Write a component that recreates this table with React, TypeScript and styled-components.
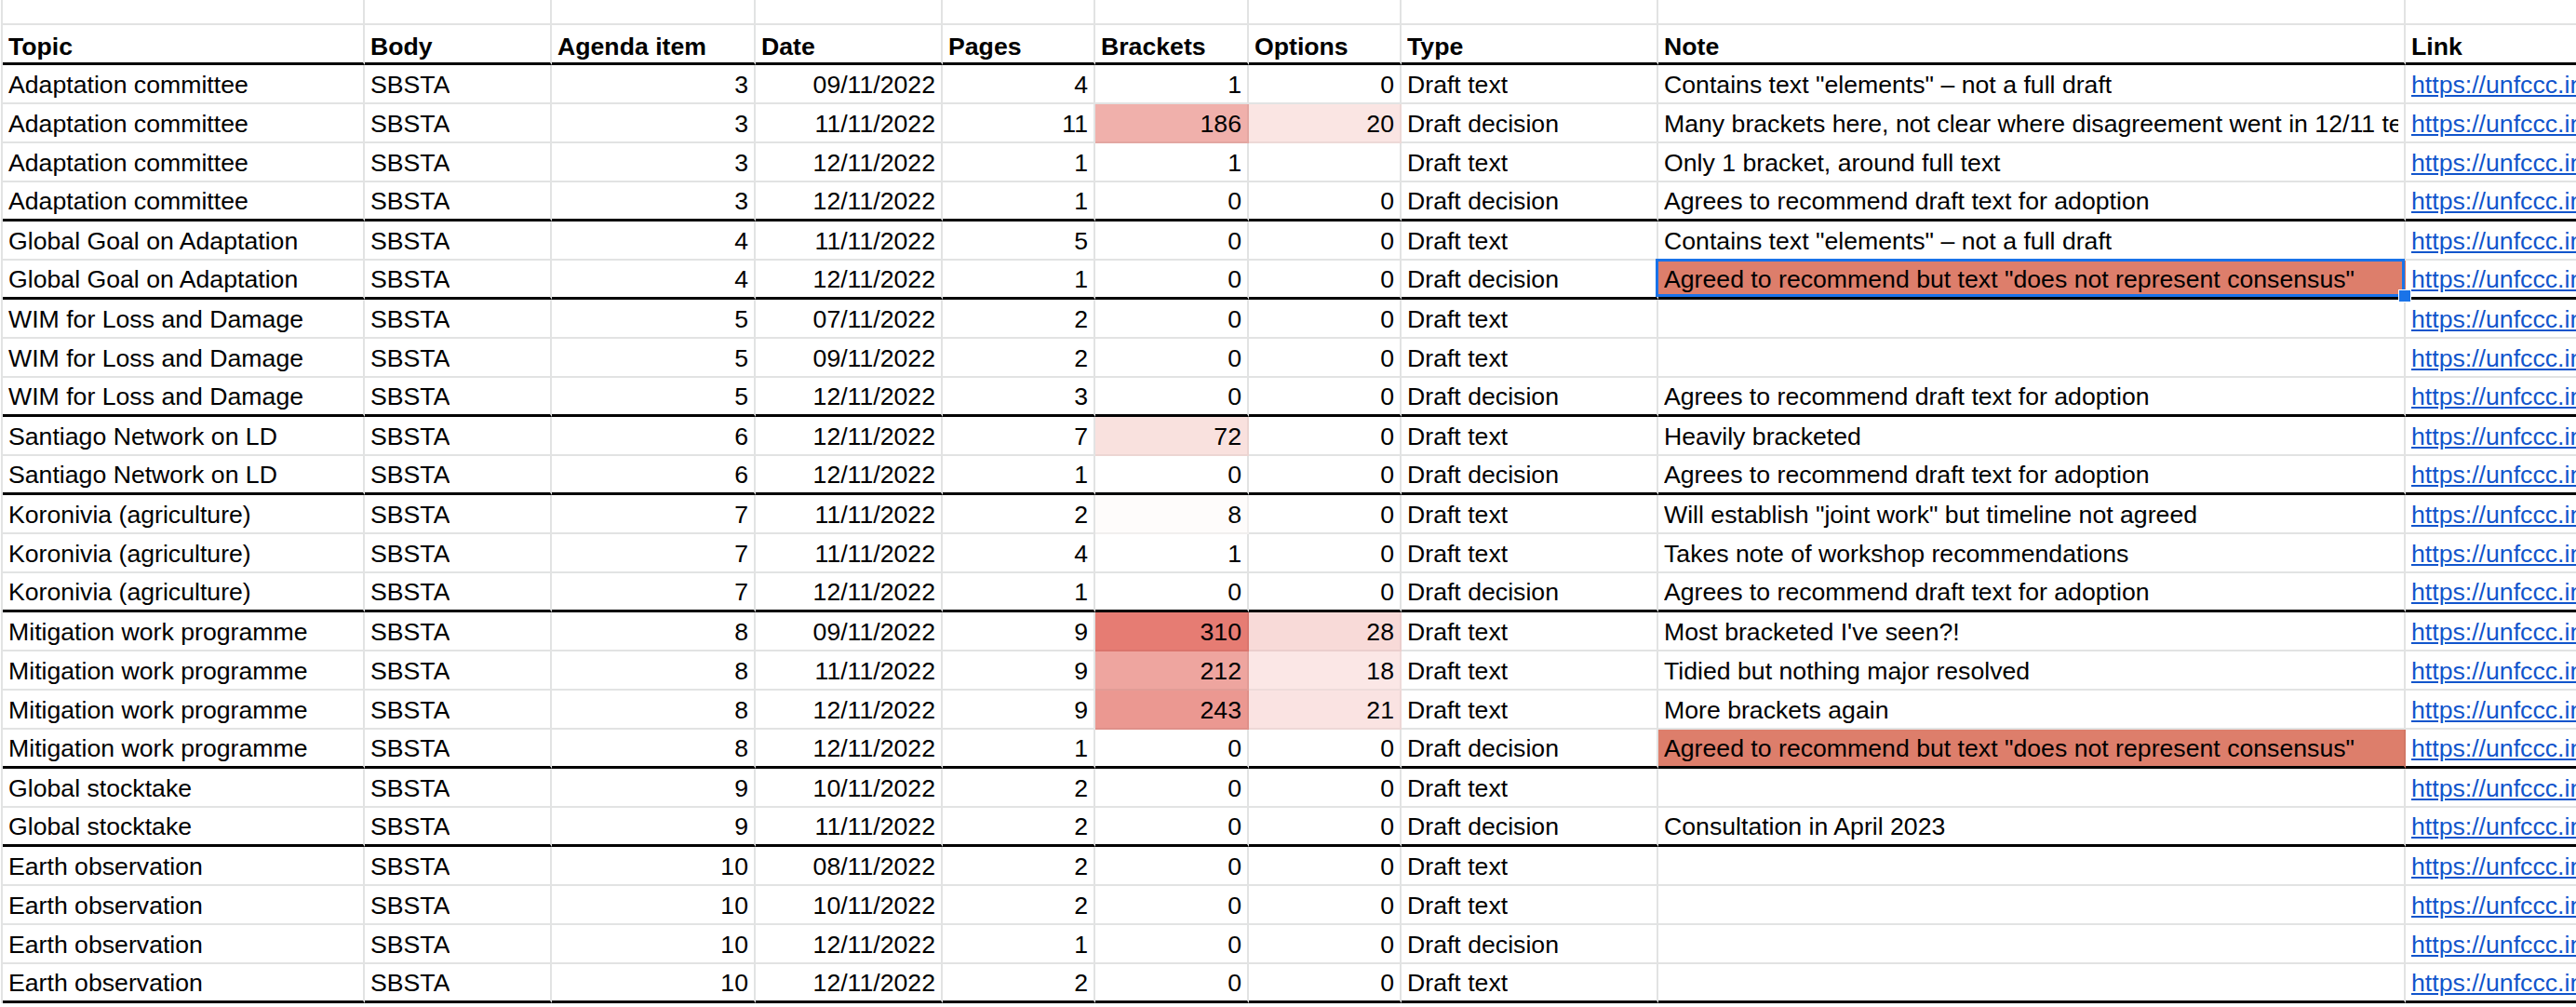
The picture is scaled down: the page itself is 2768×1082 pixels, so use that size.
import React from 'react';
import styled, { createGlobalStyle } from 'styled-components';

const GlobalStyle = createGlobalStyle`
  html, body { margin: 0; padding: 0; background: #fff; overflow: hidden; }
  body { font-family: "Liberation Sans", Arial, sans-serif; }
`;

const GRID = '389px 201px 219px 201px 164px 165px 164px 276px 803px 520px';
const GRIDLINE = '#e2e3e3';

type Kind = 'spacer' | 'header' | 'data';

const Sheet = styled.div`
  display: flex;
  flex-direction: column;
  margin-left: 1px;
  border-left: 2px solid ${GRIDLINE};
  width: max-content;
`;

const Row = styled.div<{ $kind: Kind }>`
  display: grid;
  grid-template-columns: ${GRID};
  height: ${(p) => (p.$kind === 'spacer' ? 27 : p.$kind === 'header' ? 43 : 42)}px;
`;

const Cell = styled.div<{
  $align?: 'left' | 'right';
  $kind: Kind;
  $fill?: string;
  $thick?: boolean;
}>`
  position: relative;
  box-sizing: border-box;
  display: flex;
  align-items: flex-end;
  justify-content: ${(p) => (p.$align === 'right' ? 'flex-end' : 'flex-start')};
  padding: 0 6px ${(p) => (p.$kind === 'header' ? 2 : 4)}px 6px;
  background: ${(p) => p.$fill ?? 'transparent'};
  border-right: 2px solid ${(p) => (p.$fill ? 'rgba(0,0,0,0.05)' : GRIDLINE)};
  border-bottom: ${(p) =>
    p.$thick ? '3px solid #000' : `2px solid ${p.$fill ? 'rgba(0,0,0,0.05)' : GRIDLINE}`};
  font-size: 26.67px;
  line-height: 30px;
  font-weight: ${(p) => (p.$kind === 'header' ? 700 : 400)};
  color: #000;
  min-width: 0;
`;

const Text = styled.span`
  display: block;
  min-width: 0;
  overflow: hidden;
  white-space: nowrap;
`;

const LinkText = styled.span`
  display: block;
  white-space: nowrap;
  overflow: hidden;
  color: #1155cc;
  text-decoration: underline;
  text-decoration-thickness: 2px;
  text-underline-offset: 2px;
`;

const Selection = styled.div`
  position: absolute;
  z-index: 2;
  top: -2px;
  left: -3px;
  right: -1px;
  bottom: 0;
  border: 3px solid #1a73e8;
  pointer-events: none;
`;

const Handle = styled.div`
  position: absolute;
  z-index: 3;
  right: -7px;
  bottom: -5px;
  width: 12px;
  height: 12px;
  background: #1a73e8;
  box-shadow: 0 0 0 1px #fff;
`;

type Entry = {
  topic: string;
  item: number;
  date: string;
  pages: number;
  brackets: number;
  options: number | null;
  type: string;
  note: string;
  end?: boolean;
  flag?: boolean;
  selected?: boolean;
};

const AC = 'Adaptation committee';
const GGA = 'Global Goal on Adaptation';
const WIM = 'WIM for Loss and Damage';
const SN = 'Santiago Network on LD';
const KOR = 'Koronivia (agriculture)';
const MWP = 'Mitigation work programme';
const GST = 'Global stocktake';
const EO = 'Earth observation';
const AGREES = 'Agrees to recommend draft text for adoption';
const CONSENSUS = 'Agreed to recommend but text "does not represent consensus"';
const ELEMENTS = 'Contains text "elements" – not a full draft';

const rows: Entry[] = [
  { topic: AC, item: 3, date: '09/11/2022', pages: 4, brackets: 1, options: 0, type: 'Draft text', note: ELEMENTS },
  { topic: AC, item: 3, date: '11/11/2022', pages: 11, brackets: 186, options: 20, type: 'Draft decision', note: 'Many brackets here, not clear where disagreement went in 12/11 text' },
  { topic: AC, item: 3, date: '12/11/2022', pages: 1, brackets: 1, options: null, type: 'Draft text', note: 'Only 1 bracket, around full text' },
  { topic: AC, item: 3, date: '12/11/2022', pages: 1, brackets: 0, options: 0, type: 'Draft decision', note: AGREES, end: true },
  { topic: GGA, item: 4, date: '11/11/2022', pages: 5, brackets: 0, options: 0, type: 'Draft text', note: ELEMENTS },
  { topic: GGA, item: 4, date: '12/11/2022', pages: 1, brackets: 0, options: 0, type: 'Draft decision', note: CONSENSUS, end: true, flag: true, selected: true },
  { topic: WIM, item: 5, date: '07/11/2022', pages: 2, brackets: 0, options: 0, type: 'Draft text', note: '' },
  { topic: WIM, item: 5, date: '09/11/2022', pages: 2, brackets: 0, options: 0, type: 'Draft text', note: '' },
  { topic: WIM, item: 5, date: '12/11/2022', pages: 3, brackets: 0, options: 0, type: 'Draft decision', note: AGREES, end: true },
  { topic: SN, item: 6, date: '12/11/2022', pages: 7, brackets: 72, options: 0, type: 'Draft text', note: 'Heavily bracketed' },
  { topic: SN, item: 6, date: '12/11/2022', pages: 1, brackets: 0, options: 0, type: 'Draft decision', note: AGREES, end: true },
  { topic: KOR, item: 7, date: '11/11/2022', pages: 2, brackets: 8, options: 0, type: 'Draft text', note: 'Will establish "joint work" but timeline not agreed' },
  { topic: KOR, item: 7, date: '11/11/2022', pages: 4, brackets: 1, options: 0, type: 'Draft text', note: 'Takes note of workshop recommendations' },
  { topic: KOR, item: 7, date: '12/11/2022', pages: 1, brackets: 0, options: 0, type: 'Draft decision', note: AGREES, end: true },
  { topic: MWP, item: 8, date: '09/11/2022', pages: 9, brackets: 310, options: 28, type: 'Draft text', note: "Most bracketed I've seen?!" },
  { topic: MWP, item: 8, date: '11/11/2022', pages: 9, brackets: 212, options: 18, type: 'Draft text', note: 'Tidied but nothing major resolved' },
  { topic: MWP, item: 8, date: '12/11/2022', pages: 9, brackets: 243, options: 21, type: 'Draft text', note: 'More brackets again' },
  { topic: MWP, item: 8, date: '12/11/2022', pages: 1, brackets: 0, options: 0, type: 'Draft decision', note: CONSENSUS, end: true, flag: true },
  { topic: GST, item: 9, date: '10/11/2022', pages: 2, brackets: 0, options: 0, type: 'Draft text', note: '' },
  { topic: GST, item: 9, date: '11/11/2022', pages: 2, brackets: 0, options: 0, type: 'Draft decision', note: 'Consultation in April 2023', end: true },
  { topic: EO, item: 10, date: '08/11/2022', pages: 2, brackets: 0, options: 0, type: 'Draft text', note: '' },
  { topic: EO, item: 10, date: '10/11/2022', pages: 2, brackets: 0, options: 0, type: 'Draft text', note: '' },
  { topic: EO, item: 10, date: '12/11/2022', pages: 1, brackets: 0, options: 0, type: 'Draft decision', note: '' },
  { topic: EO, item: 10, date: '12/11/2022', pages: 2, brackets: 0, options: 0, type: 'Draft text', note: '', end: true },
];

const HEADERS = ['Topic', 'Body', 'Agenda item', 'Date', 'Pages', 'Brackets', 'Options', 'Type', 'Note', 'Link'];

// Google Sheets style colour scale: white -> #e67c73
function scale(v: number | null, max: number): string | undefined {
  if (v === null) return undefined;
  const t = Math.min(1, v / max);
  if (t < 0.01) return undefined;
  const mix = (a: number) => Math.round(255 - t * (255 - a));
  return `rgb(${mix(230)}, ${mix(124)}, ${mix(115)})`;
}

const LINK = 'https://unfccc.int/documents/626561';

export default function App() {
  return (
    <>
      <GlobalStyle />
      <Sheet>
        <Row $kind="spacer">
          {HEADERS.map((h) => (
            <Cell key={h} $kind="spacer" />
          ))}
        </Row>
        <Row $kind="header">
          {HEADERS.map((h) => (
            <Cell key={h} $kind="header" $thick>
              <Text>{h}</Text>
            </Cell>
          ))}
        </Row>
        {rows.map((r, i) => (
          <Row key={i} $kind="data">
            <Cell $kind="data" $thick={r.end}>
              <Text>{r.topic}</Text>
            </Cell>
            <Cell $kind="data" $thick={r.end}>
              <Text>SBSTA</Text>
            </Cell>
            <Cell $kind="data" $thick={r.end} $align="right">
              <Text>{r.item}</Text>
            </Cell>
            <Cell $kind="data" $thick={r.end} $align="right">
              <Text>{r.date}</Text>
            </Cell>
            <Cell $kind="data" $thick={r.end} $align="right">
              <Text>{r.pages}</Text>
            </Cell>
            <Cell $kind="data" $thick={r.end} $align="right" $fill={scale(r.brackets, 310)}>
              <Text>{r.brackets}</Text>
            </Cell>
            <Cell $kind="data" $thick={r.end} $align="right" $fill={scale(r.options, 100)}>
              <Text>{r.options ?? ''}</Text>
            </Cell>
            <Cell $kind="data" $thick={r.end}>
              <Text>{r.type}</Text>
            </Cell>
            <Cell $kind="data" $thick={r.end} $fill={r.flag ? '#dd7e6b' : undefined}>
              <Text>{r.note}</Text>
              {r.selected && (
                <>
                  <Selection />
                  <Handle />
                </>
              )}
            </Cell>
            <Cell $kind="data" $thick={r.end}>
              <LinkText>{LINK}</LinkText>
            </Cell>
          </Row>
        ))}
      </Sheet>
    </>
  );
}
